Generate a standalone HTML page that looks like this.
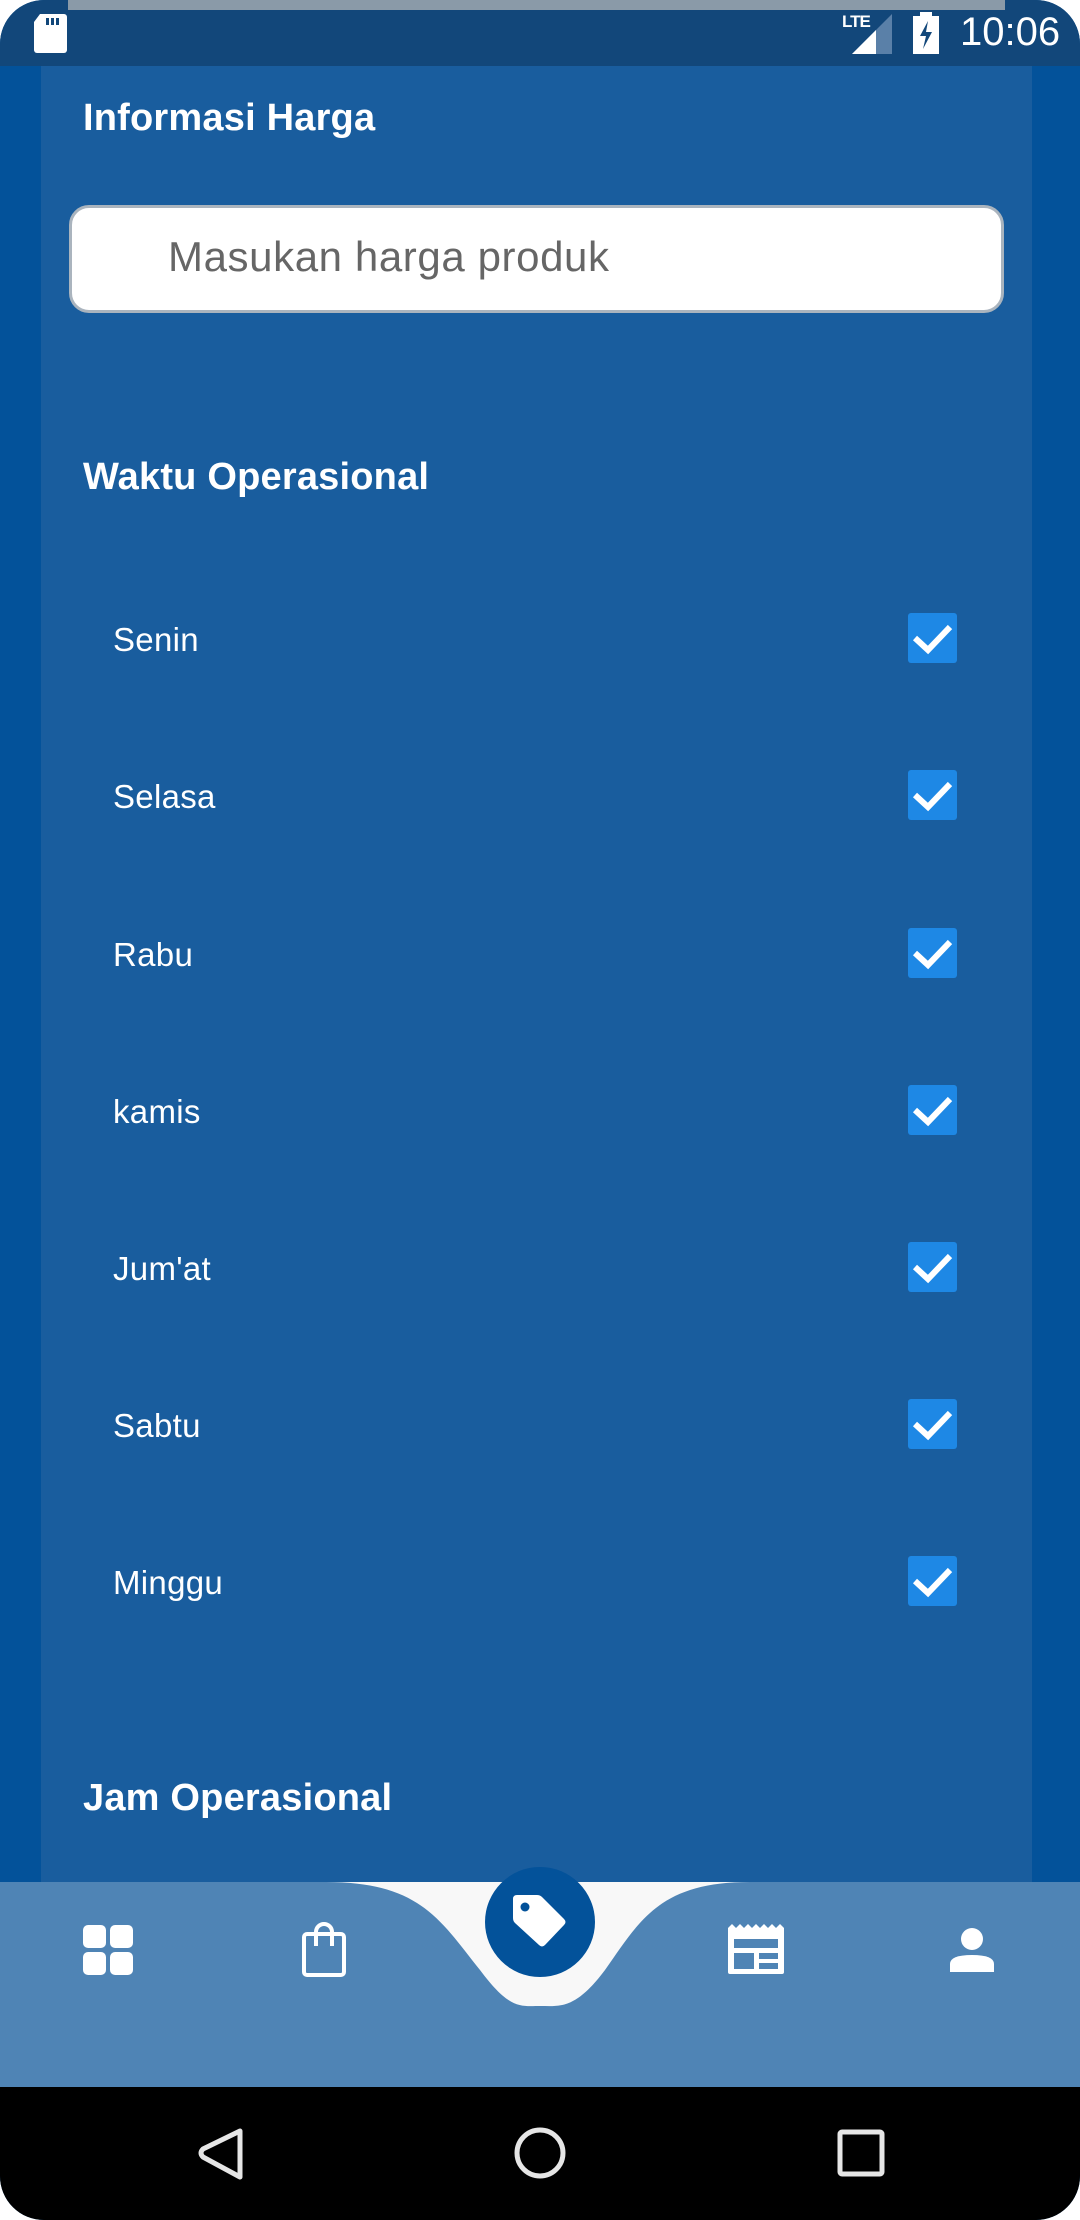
<!DOCTYPE html>
<html><head><meta charset="utf-8"><style>
*{margin:0;padding:0;box-sizing:border-box}
body{width:1080px;height:2220px;background:#fff;position:relative;overflow:hidden;font-family:"Liberation Sans",Roboto,sans-serif}
.frame{position:absolute;left:0;top:0;width:1080px;height:2220px;border-radius:44px;overflow:hidden;background:#03529a}
.status{position:absolute;left:0;top:0;width:1080px;height:66px;background:#12477a}
.gray{position:absolute;left:68px;top:0;width:937px;height:10px;background:#8a9aa8}
.panel{position:absolute;left:41px;top:66px;width:991px;height:1817px;background:#195d9e}
.h{position:absolute;left:83px;color:#fff;font-weight:bold;font-size:38px;letter-spacing:0.2px}
.input{position:absolute;left:69px;top:205px;width:935px;height:108px;background:#fff;border-radius:20px;border:3px solid #aab4be}
.input span{position:absolute;left:96px;top:25px;font-size:42px;color:#666;letter-spacing:0.6px}
.day{position:absolute;left:113px;color:#fff;font-size:33px;letter-spacing:0.3px}
.cb{position:absolute;left:908px;width:49px;height:50px;background:#1e88e5;border-radius:3px}
.nav{position:absolute;left:0;top:1882px;width:1080px;height:205px;background:#4f84b5}
.sys{position:absolute;left:0;top:2087px;width:1080px;height:133px;background:#000}
</style></head><body>
<div class="frame">
<div class="status"></div>
<div class="gray"></div>
<svg style="position:absolute;left:34px;top:14px" width="34" height="40"><path d="M6 0H30a3 3 0 0 1 3 3V36a3 3 0 0 1-3 3H3a3 3 0 0 1-3-3V8z" fill="#fff"/><rect x="12" y="4" width="3" height="7" fill="#12477a"/><rect x="17" y="4" width="3" height="7" fill="#12477a"/><rect x="22" y="4" width="3" height="7" fill="#12477a"/></svg>
<div style="position:absolute;left:842px;top:12px;color:#fff;font-size:17px;font-weight:bold;letter-spacing:-1px">LTE</div>
<svg style="position:absolute;left:852px;top:14px" width="40" height="40"><path d="M40 0V40H0z" fill="#5a80a8"/><path d="M24 16V40H0z" fill="#fff"/></svg>
<svg style="position:absolute;left:913px;top:12px" width="26" height="42"><rect x="7" y="0" width="12" height="5" fill="#fff"/><rect x="0" y="4" width="26" height="38" fill="#fff"/><path d="M15 9L7 24H13L10 37L19 20H13z" fill="#12477a"/></svg>
<div style="position:absolute;left:960px;top:10px;color:#fff;font-size:40px">10:06</div>
<div class="panel"></div>
<div class="h" style="top:97px">Informasi Harga</div>
<div class="input"><span>Masukan harga produk</span></div>
<div class="h" style="top:456px">Waktu Operasional</div>
<div class="day" style="top:621px">Senin</div>
<div class="day" style="top:778px">Selasa</div>
<div class="day" style="top:936px">Rabu</div>
<div class="day" style="top:1093px">kamis</div>
<div class="day" style="top:1250px">Jum'at</div>
<div class="day" style="top:1407px">Sabtu</div>
<div class="day" style="top:1564px">Minggu</div>
<svg width="0" height="0" style="position:absolute"><defs><g id="ck"><path d="M7 25L20 37L42 14" stroke="#fff" stroke-width="6" fill="none"/></g></defs></svg>
<div class="cb" style="top:613px"><svg width="49" height="50"><use href="#ck"/></svg></div>
<div class="cb" style="top:770px"><svg width="49" height="50"><use href="#ck"/></svg></div>
<div class="cb" style="top:928px"><svg width="49" height="50"><use href="#ck"/></svg></div>
<div class="cb" style="top:1085px"><svg width="49" height="50"><use href="#ck"/></svg></div>
<div class="cb" style="top:1242px"><svg width="49" height="50"><use href="#ck"/></svg></div>
<div class="cb" style="top:1399px"><svg width="49" height="50"><use href="#ck"/></svg></div>
<div class="cb" style="top:1556px"><svg width="49" height="50"><use href="#ck"/></svg></div>
<div class="h" style="top:1777px">Jam Operasional</div>
<div class="nav"></div>
<svg style="position:absolute;left:0;top:1860px" width="1080" height="227">
<path d="M326 22C420 22 440 60 480 110C510 150 520 146 540 146C560 146 575 150 605 110C640 60 660 22 750 22Z" fill="#f8f8f8"/>
<circle cx="540" cy="62" r="55" fill="#03529a"/>
<path d="M513 39Q513 35 517 35H537Q540 35 542 37L564 59Q567 62 564 65L545 85Q542 88 539 85L515 63Q513 61 513 58Z" fill="#fff"/>
<circle cx="525" cy="47" r="4.5" fill="#03529a"/>
<rect x="83" y="65" width="23" height="23" rx="5" fill="#fff"/><rect x="110" y="65" width="23" height="23" rx="5" fill="#fff"/>
<rect x="83" y="92" width="23" height="23" rx="5" fill="#fff"/><rect x="110" y="92" width="23" height="23" rx="5" fill="#fff"/>
<rect x="304" y="74" width="40" height="41" rx="3" fill="none" stroke="#fff" stroke-width="4"/>
<path d="M316 86V72a8 8 0 0 1 16 0V86" fill="none" stroke="#fff" stroke-width="4"/>
<path d="M728 68l4-4 4 4 4-4 4 4 4-4 4 4 4-4 4 4 4-4 4 4 4-4 4 4 4-4 4 4V112a2 2 0 0 1-2 2H730a2 2 0 0 1-2-2Z" fill="#fff"/>
<rect x="734" y="79" width="44" height="9" fill="#4f84b5"/><rect x="734" y="93" width="20" height="16" fill="#4f84b5"/><rect x="759" y="93" width="19" height="6" fill="#4f84b5"/><rect x="759" y="103" width="19" height="6" fill="#4f84b5"/>
<circle cx="972" cy="79" r="11" fill="#fff"/>
<path d="M950 112V104Q950 95 972 95Q994 95 994 104V112Z" fill="#fff"/>
</svg>
<div class="sys"></div>
<svg style="position:absolute;left:0;top:2087px" width="1080" height="133">
<path d="M240 44L203 62Q199 66 203 70L240 90Z" fill="none" stroke="#e6e6e6" stroke-width="5" stroke-linejoin="round"/>
<circle cx="540" cy="66" r="23" fill="none" stroke="#e6e6e6" stroke-width="5"/>
<rect x="840" y="45" width="42" height="42" rx="2" fill="none" stroke="#e6e6e6" stroke-width="5"/>
</svg>
</div>
</body></html>
